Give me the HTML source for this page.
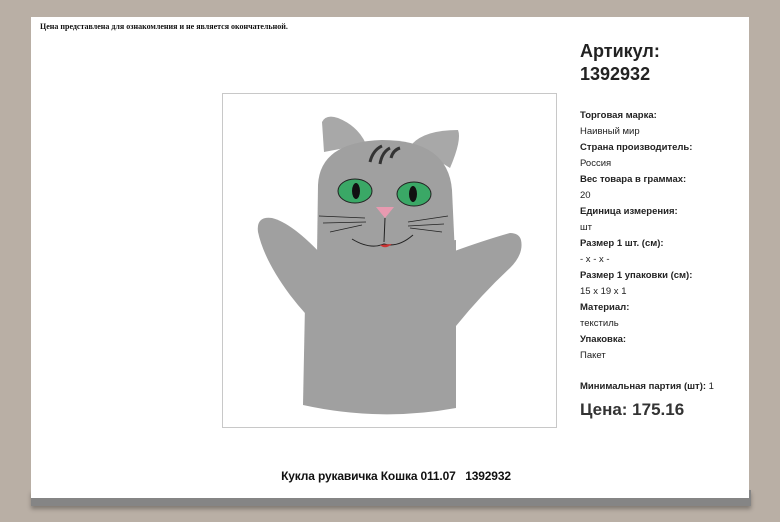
<!DOCTYPE html>
<html><head><meta charset="utf-8"><style>
*{margin:0;padding:0}
body{width:780px;height:522px;background:#b9afa5;position:relative;overflow:hidden;font-family:"Liberation Sans",Arial,sans-serif;color:#222}
.shadow{position:absolute;left:31px;top:490px;width:720px;height:16px;background:#858585;box-shadow:0 3px 4px rgba(0,0,0,.3)}
.page{position:absolute;left:31px;top:17px;width:718px;height:481px;background:#fff}
.note{position:absolute;left:40px;top:22px;font-family:"Liberation Serif",serif;font-size:8px;font-weight:bold;color:#111}
.art{position:absolute;left:580px;top:40px;font-size:18px;font-weight:bold;line-height:23px;color:#222}
.info{position:absolute;left:580px;top:108px;font-size:9.5px;line-height:16px;color:#222}
.info b{font-weight:bold}
.min{position:absolute;left:580px;top:381px;font-size:9.5px;color:#222}
.price{position:absolute;left:580px;top:400px;font-size:17px;font-weight:bold;color:#333}
.title{position:absolute;left:0;width:792px;text-align:center;top:469px;font-size:12px;font-weight:bold;letter-spacing:-0.15px;color:#111}
svg{position:absolute;left:220px;top:90px}
</style></head><body>
<div class="shadow"></div>
<div class="page"></div>
<div class="note">Цена представлена для ознакомления и не является окончательной.</div>
<div class="art">Артикул:<br>1392932</div>
<div class="info"><b>Торговая марка:</b><br>Наивный мир<br><b>Страна производитель:</b><br>Россия<br><b>Вес товара в граммах:</b><br>20<br><b>Единица измерения:</b><br>шт<br><b>Размер 1 шт. (см):</b><br>- x - x -<br><b>Размер 1 упаковки (см):</b><br>15 x 19 x 1<br><b>Материал:</b><br>текстиль<br><b>Упаковка:</b><br>Пакет</div>
<div class="min"><b>Минимальная партия (шт):</b> 1</div>
<div class="price">Цена: 175.16</div>
<div class="title">Кукла рукавичка Кошка 011.07&nbsp;&nbsp; 1392932</div>
<svg width="340" height="340" viewBox="0 0 340 340">
<rect x="2.5" y="3.5" width="334" height="334" fill="#fff" stroke="#c8c8c8"/>
<path d="M104 62 L102 32 Q106 24 118 28 Q138 36 146 54 Z" fill="#a8a8a8"/>
<path d="M192 54 Q205 40 238 40 Q242 50 230 78 Z" fill="#a8a8a8"/>
<g fill="#a0a0a0">
<path d="M38 142 Q36 126 52 128 Q72 133 102 165 L102 240 Q86 226 70 205 Q44 170 38 142 Z"/>
<path d="M301 150 Q304 164 290 178 Q262 204 236 236 L232 162 Q265 150 290 143 Q299 143 301 150 Z"/>
<path d="M86 165 L83 315 Q160 332 236 318 L236 150 Z"/>
<path d="M97 165 L98 95 Q100 52 162 50 Q228 50 232 100 L235 165 Z"/>
</g>
<path d="M150 72 Q153 60 162 56 M160 74 Q162 62 170 58 M171 68 Q173 60 180 58" stroke="#333" stroke-width="3" fill="none"/>
<ellipse cx="135" cy="101" rx="17" ry="12" fill="#3aa866" stroke="#222"/>
<ellipse cx="194" cy="104" rx="17" ry="12" fill="#3aa866" stroke="#222"/>
<ellipse cx="136" cy="101" rx="4" ry="8" fill="#111"/>
<ellipse cx="193" cy="104" rx="4" ry="8" fill="#111"/>
<path d="M156 117 L174 117 L165 128 Z" fill="#e79ab0"/>
<path d="M165 128 L164 152 M132 149 Q150 160 164 154 Q178 158 193 145" stroke="#222" fill="none"/>
<path d="M160 155 Q165 160 172 154 Z" fill="#c33"/>
<path d="M99 126 L145 128 M103 133 L146 132 M110 142 L142 135 M188 132 L228 126 M188 136 L224 134 M190 138 L222 142" stroke="#222" stroke-width="0.8" fill="none"/>
</svg>
</body></html>
